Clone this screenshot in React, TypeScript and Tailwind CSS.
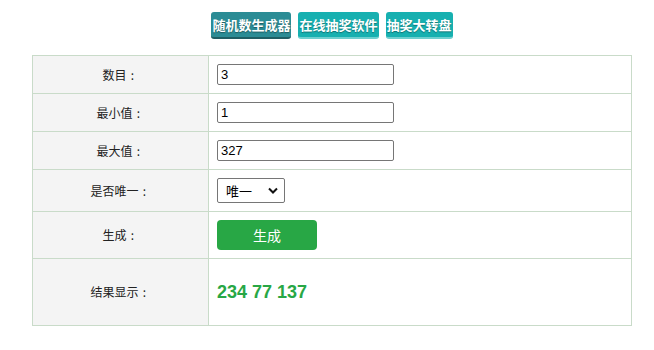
import React from 'react';

const cjk = "font-['Microsoft_YaHei','Noto_Sans_CJK_SC',sans-serif]";

const navs = [
  { label: '随机数生成器', active: true },
  { label: '在线抽奖软件', active: false },
  { label: '抽奖大转盘', active: false },
];

function Label({ text }: { text: string }) {
  return (
    <span>
      {text}
      <span className="inline-block w-[12px] text-center">:</span>
    </span>
  );
}

export default function App() {
  return (
    <div className="w-[654px] h-[350px] bg-white">
      {/* Top nav */}
      <div className="flex justify-center gap-[7px] pt-[12px] pl-[10px]">
        {navs.map((n) => (
          <span
            key={n.label}
            className={`${cjk} h-[27px] px-[1px] flex items-center rounded-[3px] text-[13px] font-bold text-white [text-shadow:0_1px_1px_rgba(0,0,0,0.35)] ${
              n.active
                ? 'bg-[#2b8c95] border-b-2 border-[#1f5e64]'
                : 'bg-[#17b0b0] border-b-2 border-[#6fcfcf]'
            }`}
          >
            {n.label}
          </span>
        ))}
      </div>

      {/* Form table */}
      <table className="mt-[16px] ml-[32px] w-[600px] border-collapse border border-[#c9dbc9] text-[12px] text-[#222]">
        <tbody>
          <tr>
            <td className={`${cjk} w-[176px] h-[38px] bg-[#f4f4f4] border border-[#c9dbc9] text-center`}><Label text="数目" /></td>
            <td className="h-[38px] border border-[#c9dbc9] pl-[8px]">
              <input
                defaultValue="3"
                className="w-[177px] h-[21px] border border-[#767676] rounded-[2px] px-[3px] text-[13px] font-['Liberation_Sans',Arial,sans-serif] text-black outline-none"
              />
            </td>
          </tr>
          <tr>
            <td className={`${cjk} h-[38px] bg-[#f4f4f4] border border-[#c9dbc9] text-center`}><Label text="最小值" /></td>
            <td className="h-[38px] border border-[#c9dbc9] pl-[8px]">
              <input
                defaultValue="1"
                className="w-[177px] h-[21px] border border-[#767676] rounded-[2px] px-[3px] text-[13px] font-['Liberation_Sans',Arial,sans-serif] text-black outline-none"
              />
            </td>
          </tr>
          <tr>
            <td className={`${cjk} h-[38px] bg-[#f4f4f4] border border-[#c9dbc9] text-center`}><Label text="最大值" /></td>
            <td className="h-[38px] border border-[#c9dbc9] pl-[8px]">
              <input
                defaultValue="327"
                className="w-[177px] h-[21px] border border-[#767676] rounded-[2px] px-[3px] text-[13px] font-['Liberation_Sans',Arial,sans-serif] text-black outline-none"
              />
            </td>
          </tr>
          <tr>
            <td className={`${cjk} h-[42px] bg-[#f4f4f4] border border-[#c9dbc9] text-center`}><Label text="是否唯一" /></td>
            <td className="h-[42px] border border-[#c9dbc9] pl-[8px]">
              <div className={`${cjk} w-[68px] h-[25px] border border-[#767676] rounded-[2px] flex items-center justify-between pl-[8px] pr-[6px] text-[13px] text-black`}>
                <span>唯一</span>
                <svg width="10" height="7" viewBox="0 0 10 7">
                  <path d="M1 1.5 L5 5.5 L9 1.5" fill="none" stroke="#111" strokeWidth="2" />
                </svg>
              </div>
            </td>
          </tr>
          <tr>
            <td className={`${cjk} h-[47px] bg-[#f4f4f4] border border-[#c9dbc9] text-center`}><Label text="生成" /></td>
            <td className="h-[47px] border border-[#c9dbc9] pl-[8px]">
              <button className={`${cjk} w-[100px] h-[30px] rounded-[4px] bg-[#28a745] text-white text-[14px]`}>
                生成
              </button>
            </td>
          </tr>
          <tr>
            <td className={`${cjk} h-[67px] bg-[#f4f4f4] border border-[#c9dbc9] text-center`}><Label text="结果显示" /></td>
            <td className="h-[67px] border border-[#c9dbc9] pl-[8px]">
              <span className="font-['Liberation_Sans',Arial,sans-serif] font-bold text-[18px] text-[#28a745]">
                234 77 137
              </span>
            </td>
          </tr>
        </tbody>
      </table>
    </div>
  );
}
